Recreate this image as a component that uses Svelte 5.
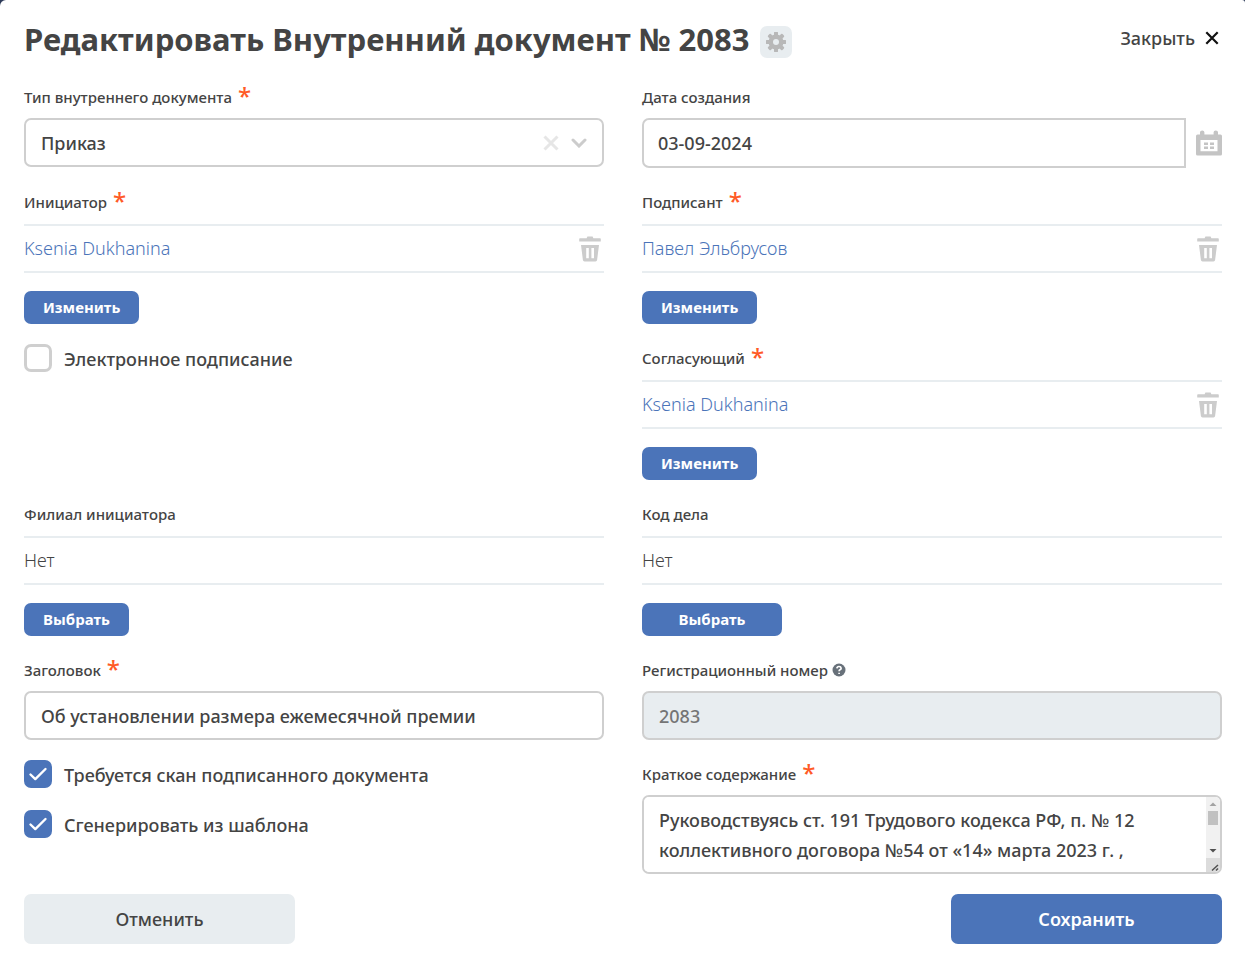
<script>
  let docType = $state('Приказ');
  let date = $state('03-09-2024');
  let title = $state('Об установлении размера ежемесячной премии');
  let summary = $state(
    'Руководствуясь ст. 191 Трудового кодекса РФ, п. № 12 коллективного договора №54 от «14» марта 2023 г. ,'
  );
  let eSign = $state(false);
  let needScan = $state(true);
  let fromTemplate = $state(true);
</script>

{#snippet caption(text, required)}
  {text}{#if required}<span class="star" aria-hidden="true">*</span>{/if}
{/snippet}

{#snippet check()}
  <svg class="tick" viewBox="0 0 28 28" aria-hidden="true"><path d="M6.5 14.5l4.8 4.6L21.5 9" /></svg>
{/snippet}

{#snippet picker(label, value, required, action, wide)}
  <section class="field">
    <h2 class="label person-label">{@render caption(label, required)}</h2>
    <div class="person">
      {#if required}
        <a href="#person">{value}</a>
        <button class="icon-btn" type="button" aria-label="Удалить">
          <svg class="trash" viewBox="0 0 22 26" aria-hidden="true">
            <path d="M1 2.2h6.6L8.4.4h5.2l.8 1.8H21q.8 0 .8.800v2.400H.2V3q0-.8.8-.8z" />
            <path fill-rule="evenodd" d="M2 9h18l-1.900 15q-.2 1.400-1.600 1.400H5.500q-1.400 0-1.600-1.400zM7.200 12v10.200h2.600V12zM12.400 12v10.200H15V12z" />
          </svg>
        </button>
      {:else}
        <span>{value}</span>
      {/if}
    </div>
    <button class="small-btn" class:wide type="button">{action}</button>
  </section>
{/snippet}

<main class="dialog">
  <header>
    <h1>Редактировать Внутренний документ № 2083</h1>
    <button class="gear" type="button" aria-label="Настройки">
      <svg viewBox="-10 -10 20 20" aria-hidden="true">
        {#each [0, 45, 90, 135] as angle}
          <rect x="-2" y="-10.200" width="4" height="20.400" rx="1" transform="rotate({angle})" />
        {/each}
        <circle r="7.500" />
        <circle class="hole" r="3" />
      </svg>
    </button>
    <button class="close" type="button">
      Закрыть
      <svg viewBox="0 0 14 14" aria-hidden="true"><path d="M1.3 1.3l11.4 11.4M12.7 1.3L1.3 12.7" /></svg>
    </button>
  </header>

  <form onsubmit={(e) => e.preventDefault()}>
    <div class="field">
      <label class="label" for="type">{@render caption('Тип внутреннего документа', true)}</label>
      <div class="select">
        <select id="type" class="box" bind:value={docType}>
          <option>Приказ</option>
        </select>
        <div class="select-icons">
          <button class="icon-btn" type="button" aria-label="Очистить">
            <svg class="clear" viewBox="0 0 16 16" aria-hidden="true"><path d="M1.5 1.5l13 13M14.5 1.5l-13 13" /></svg>
          </button>
          <svg class="chevron" viewBox="0 0 16 10" aria-hidden="true"><path d="M2 2l6 6 6-6" /></svg>
        </div>
      </div>
    </div>

    <div class="field">
      <label class="label" for="date">Дата создания</label>
      <div class="date">
        <input id="date" class="box" type="text" bind:value={date} />
        <button class="icon-btn" type="button" aria-label="Открыть календарь">
          <svg class="calendar" viewBox="0 0 26 26" aria-hidden="true">
            <path fill-rule="evenodd" d="M1.5 4.4H4V2.2Q4 .5 6.2.5t2.2 1.7v2.2h9.2V2.2q0-1.7 2.2-1.7T22 2.2v2.2h2.5Q26 4.4 26 6v18q0 1.5-1.5 1.5h-23Q0 25.500 0 24V6q0-1.600 1.500-1.600zM4.500 10v11.300h17V10z" />
            <path d="M8 12.500h4v2.600H8zM14 12.500h4v2.600h-4zM8 16.400h4V19H8zM14 16.400h4V19h-4z" />
          </svg>
        </button>
      </div>
    </div>

    {@render picker('Инициатор', 'Ksenia Dukhanina', true, 'Изменить', false)}
    {@render picker('Подписант', 'Павел Эльбрусов', true, 'Изменить', false)}

    <div class="checks">
      <label class="check">
        <input type="checkbox" bind:checked={eSign} />{@render check()}
        <span>Электронное подписание</span>
      </label>
    </div>
    {@render picker('Согласующий', 'Ksenia Dukhanina', true, 'Изменить', false)}

    {@render picker('Филиал инициатора', 'Нет', false, 'Выбрать', false)}
    {@render picker('Код дела', 'Нет', false, 'Выбрать', true)}

    <div class="field">
      <label class="label" for="title">{@render caption('Заголовок', true)}</label>
      <input id="title" class="box" type="text" bind:value={title} />
    </div>

    <div class="field">
      <label class="label" for="number">
        Регистрационный номер
        <svg class="help" viewBox="0 0 14 14" aria-hidden="true">
          <circle cx="7" cy="7" r="6.500" />
          <path d="M4.900 5.400Q5.100 3.500 7 3.500t2.100 1.700Q9.100 6.300 8 6.800 7.100 7.200 7.100 8.200M7.100 9.700v1.400" />
        </svg>
      </label>
      <input id="number" class="box" type="text" value="2083" disabled />
    </div>

    <div class="checks">
      <label class="check">
        <input type="checkbox" bind:checked={needScan} />{@render check()}
        <span>Требуется скан подписанного документа</span>
      </label>
      <label class="check">
        <input type="checkbox" bind:checked={fromTemplate} />{@render check()}
        <span>Сгенерировать из шаблона</span>
      </label>
    </div>

    <div class="field">
      <label class="label" for="summary">{@render caption('Краткое содержание', true)}</label>
      <div class="summary">
        <textarea id="summary" class="box" bind:value={summary}></textarea>
        <div class="scrollbar" aria-hidden="true">
          <svg viewBox="0 0 14 14"><path fill="#a3a3a3" d="M3.500 9L7 5.500 10.500 9z" /></svg>
          <span class="thumb"></span>
          <svg class="down" viewBox="0 0 14 14"><path fill="#505050" d="M3.500 5L7 8.500 10.500 5z" /></svg>
          <svg class="grip" viewBox="0 0 14 14"><path fill="none" stroke="#505050" stroke-width="1.500" d="M6 12.500L12 7M10 12.500l2-2" /></svg>
        </div>
      </div>
    </div>

    <div class="actions">
      <button class="big-btn" type="button">Отменить</button>
      <button class="big-btn primary" type="submit">Сохранить</button>
    </div>
  </form>
</main>

<style>
  :global(body) {
    background: #2d3a58;
  }
  * {
    box-sizing: border-box;
  }
  .dialog {
    min-height: 100vh;
    padding: 20px 23px 32px 24px;
    border-radius: 6px 3px 0 0;
    background: #fff;
    color: #444;
    font-family: 'Noto Sans', sans-serif;
    font-size: 18px;
    font-weight: 500;
  }
  button,
  input,
  select,
  textarea {
    margin: 0;
    font: inherit;
    color: inherit;
  }
  button {
    padding: 0;
    border: 0;
    background: none;
    cursor: pointer;
  }
  svg {
    display: block;
    flex: none;
  }
  header {
    display: flex;
    align-items: center;
    gap: 10px;
    height: 40px;
    margin-bottom: 23px;
  }
  h1 {
    margin: 0;
    padding-bottom: 2px;
    font-size: 31px;
    line-height: 38px;
    font-weight: 700;
    white-space: nowrap;
  }
  .gear {
    display: grid;
    place-items: center;
    width: 32px;
    height: 32px;
    margin-top: 4px;
    border-radius: 7px;
    background: #e8edf0;
  }
  .gear svg {
    width: 20px;
    height: 20px;
    fill: #b8b8b8;
  }
  .gear .hole {
    fill: #e8edf0;
  }
  .close {
    display: flex;
    align-items: center;
    gap: 10px;
    margin-left: auto;
    padding: 0 3px 4px 0;
  }
  .close svg {
    width: 14px;
    height: 14px;
    fill: none;
    stroke: #111;
    stroke-width: 2.2;
  }
  form {
    display: grid;
    grid-template-columns: minmax(0, 1fr) minmax(0, 1fr);
    gap: 20px 38px;
  }
  .field {
    padding-top: 3px;
  }
  .label {
    display: flex;
    align-items: center;
    height: 22px;
    margin: 0 0 10px;
    font-size: 15px;
    line-height: 22px;
    font-weight: 500;
  }
  .person-label {
    margin-bottom: 11px;
  }
  .star {
    margin-left: 6px;
    padding-bottom: 2px;
    color: #ff5a26;
    font-size: 24px;
    line-height: 20px;
  }
  .help {
    width: 14px;
    height: 14px;
    margin-left: 4px;
    fill: #68717a;
  }
  .help path {
    fill: none;
    stroke: #fff;
    stroke-width: 1.7;
  }
  .box {
    display: block;
    width: 100%;
    height: 49px;
    padding: 0 15px;
    border: 2px solid #cfcfcf;
    border-radius: 7px;
    outline: 0;
    background: #fff;
  }
  .box:disabled {
    background: #e8edf0;
    color: #757575;
  }
  .select,
  .summary {
    position: relative;
  }
  select.box {
    appearance: none;
  }
  .select-icons {
    position: absolute;
    inset: 1px 17px 0 auto;
    display: flex;
    align-items: center;
    gap: 12px;
  }
  .clear {
    width: 16px;
    height: 16px;
    fill: none;
    stroke: #e6e6e6;
    stroke-width: 3;
  }
  .chevron {
    width: 16px;
    height: 10px;
    fill: none;
    stroke: #ccc;
    stroke-width: 3;
    stroke-linecap: round;
  }
  .date {
    display: flex;
    align-items: center;
    gap: 10px;
  }
  .date .box {
    flex: 1;
    min-width: 0;
    height: 50px;
    padding: 0 14px;
    border-radius: 7px 0 0 7px;
  }
  .calendar {
    width: 26px;
    height: 26px;
    fill: #c4c4c4;
  }
  .person {
    display: flex;
    align-items: center;
    justify-content: space-between;
    height: 49px;
    margin-bottom: 18px;
    padding-right: 3px;
    border: solid #e8edf0;
    border-width: 2px 0;
    font-weight: 300;
  }
  .person a,
  .person span {
    padding-bottom: 2px;
  }
  .person a {
    color: #4b74b9;
    text-decoration: none;
  }
  .trash {
    width: 22px;
    height: 26px;
    fill: #ccc;
  }
  .small-btn {
    display: block;
    min-width: 105px;
    height: 33px;
    padding: 0 19px 1px;
    border-radius: 7px;
    background: #4b74b9;
    color: #fff;
    font-size: 15px;
    font-weight: 700;
  }
  .small-btn.wide {
    min-width: 140px;
  }
  .checks {
    display: flex;
    flex-direction: column;
    gap: 22px;
  }
  .check {
    display: grid;
    grid-template-columns: 28px 1fr;
    column-gap: 12px;
    height: 28px;
    line-height: 30px;
  }
  .check input {
    grid-area: 1 / 1;
    appearance: none;
    width: 28px;
    height: 28px;
    border: 3px solid #cfcfcf;
    border-radius: 7px;
    background: #fff;
  }
  .check input:checked {
    border-color: #4b74b9;
    background: #4b74b9;
  }
  .tick {
    grid-area: 1 / 1;
    width: 28px;
    height: 28px;
    fill: none;
    stroke: #fff;
    stroke-width: 2.4;
    stroke-linecap: round;
    stroke-linejoin: round;
    pointer-events: none;
  }
  textarea.box {
    height: 79px;
    padding: 8px 29px 8px 15px;
    line-height: 30px;
    resize: none;
  }
  .scrollbar {
    position: absolute;
    inset: 2px 2px 2px auto;
    display: flex;
    flex-direction: column;
    align-items: center;
    width: 14px;
    overflow: hidden;
    border-radius: 0 5px 5px 0;
    background: #f1f1f1;
    pointer-events: none;
  }
  .scrollbar svg {
    width: 14px;
    height: 14px;
  }
  .thumb {
    width: 10px;
    height: 14px;
    background: #c1c1c1;
  }
  .scrollbar .down {
    margin-top: auto;
  }
  .scrollbar .grip {
    background: #dcdcdc;
  }
  .actions {
    grid-column: 1 / -1;
    display: flex;
    justify-content: space-between;
  }
  .big-btn {
    width: 271px;
    height: 50px;
    border-radius: 7px;
    background: #e8edf0;
  }
  .big-btn.primary {
    background: #4b74b9;
    color: #fff;
    font-weight: 600;
  }
</style>
